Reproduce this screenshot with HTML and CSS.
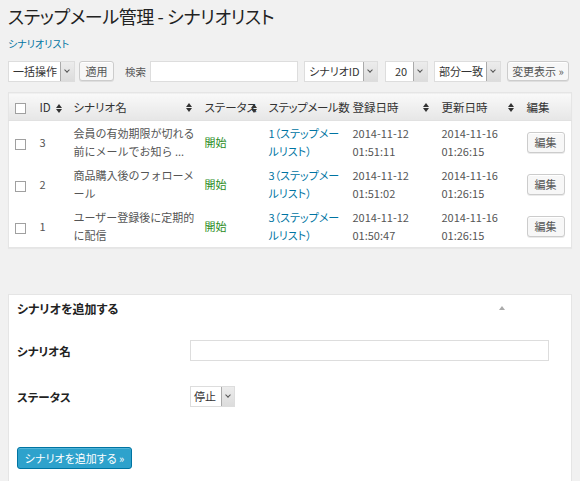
FILE: index.html
```html
<!DOCTYPE html>
<html lang="ja">
<head>
	<meta charset="UTF-8">
	<title>ステップメール管理 - シナリオリスト</title>
	<link rel="stylesheet" href="styles.css">
</head>
<body>
	<div class="wrap">
		<h1 class="page_title">ステップメール管理 - シナリオリスト</h1>
		<div class="subsub"><a href="#">シナリオリスト</a></div>

		<div class="tablenav">
			<div class="sel w_bulk"><span>一括操作</span><i class="arr"></i></div>
			<a class="btn">適用</a>
			<label class="search_label">検索</label>
			<input type="text" class="search_input">
			<div class="sel w_field"><span>シナリオID</span><i class="arr"></i></div>
			<div class="sel w_num"><span>20</span><i class="arr"></i></div>
			<div class="sel w_match"><span>部分一致</span><i class="arr"></i></div>
			<a class="btn btn_view">変更表示 »</a>
		</div>

		<table class="list">
			<colgroup>
				<col style="width:24px"><col style="width:34px"><col style="width:131px"><col style="width:64px">
				<col style="width:84px"><col style="width:89px"><col style="width:85px"><col>
			</colgroup>
			<thead>
				<tr>
					<th><span class="cb"></span></th>
					<th>ID <i class="sort"></i></th>
					<th class="sortable"><i class="sort"></i>シナリオ名</th>
					<th class="status_head">ステータス<i class="sort"></i></th>
					<th class="over">ステップメール数</th>
					<th class="sortable"><i class="sort"></i>登録日時</th>
					<th class="sortable"><i class="sort"></i>更新日時</th>
					<th>編集</th>
				</tr>
			</thead>
			<tbody>
				<tr>
					<td><span class="cb"></span></td>
					<td>3</td>
					<td>会員の有効期限が切れる前にメールでお知ら ...</td>
					<td class="st">開始</td>
					<td><a href="#">1（ステップメールリスト）</a></td>
					<td>2014-11-12 01:51:11</td>
					<td>2014-11-16 01:26:15</td>
					<td><a class="btn">編集</a></td>
				</tr>
				<tr>
					<td><span class="cb"></span></td>
					<td>2</td>
					<td>商品購入後のフォローメール</td>
					<td class="st">開始</td>
					<td><a href="#">3（ステップメールリスト）</a></td>
					<td>2014-11-12 01:51:02</td>
					<td>2014-11-16 01:26:15</td>
					<td><a class="btn">編集</a></td>
				</tr>
				<tr>
					<td><span class="cb"></span></td>
					<td>1</td>
					<td>ユーザー登録後に定期的に配信</td>
					<td class="st">開始</td>
					<td><a href="#">3（ステップメールリスト）</a></td>
					<td>2014-11-12 01:50:47</td>
					<td>2014-11-16 01:26:15</td>
					<td><a class="btn">編集</a></td>
				</tr>
			</tbody>
		</table>

		<div class="postbox">
			<div class="postbox_head">
				<h3>シナリオを追加する</h3>
				<i class="toggle"></i>
			</div>
			<div class="form_row">
				<label>シナリオ名</label>
				<input type="text" class="name_input">
			</div>
			<div class="form_row">
				<label>ステータス</label>
				<div class="sel w_status"><span>停止</span><i class="arr"></i></div>
			</div>
			<div class="submit_row">
				<a class="btn_primary">シナリオを追加する »</a>
			</div>
		</div>
	</div>
</body>
</html>
```

FILE: styles.css
```css
html,body{
	margin:0;
	padding:0;
}
body{
	background:#f1f1f1;
	color:#444;
	font-family:"Noto Sans CJK JP","Liberation Sans",sans-serif;
	font-size:12px;
}
a{
	color:#0074a2;
	text-decoration:none;
}
.wrap{
	padding:0 8px;
}
.page_title{
	margin:2px 0 0;
	font-size:18px;
	line-height:28px;
	font-weight:normal;
	color:#222;
	letter-spacing:-0.4px;
	font-feature-settings:"palt";
}
.subsub{
	margin-top:7px;
	font-size:10px;
	line-height:14px;
	font-feature-settings:"palt";
}
.tablenav{
	display:flex;
	align-items:center;
	height:22px;
	margin-top:9px;
}
/* 疑似セレクト */
.sel{
	display:flex;
	height:21px;
	box-sizing:border-box;
	border:1px solid #ddd;
	background:#fff;
	color:#333;
	font-size:11px;
}
.sel span{
	flex:1;
	padding-left:4px;
	line-height:19px;
	white-space:nowrap;
	overflow:hidden;
}
.sel .arr{
	flex:none;
	width:13px;
	border-left:1px solid #aaa;
	background:linear-gradient(#ececec,#dcdcdc);
	position:relative;
}
.sel .arr:after{
	content:"";
	position:absolute;
	left:4px;
	top:6px;
	width:3px;
	height:3px;
	border-right:1.5px solid #555;
	border-bottom:1.5px solid #555;
	transform:rotate(45deg);
}
.w_bulk{width:67px;}
.w_field{width:74px;margin-left:6px;}
.w_field span{font-feature-settings:"palt";}
.w_num{width:43px;margin-left:7px;}
.w_num span{padding-left:9px;}
.w_match{width:67px;margin-left:6px;}
.btn{
	display:inline-block;
	height:20px;
	box-sizing:border-box;
	padding:0 7px;
	border:1px solid #ccc;
	border-radius:3px;
	background:#f7f7f7;
	box-shadow:0 1px 0 #fff inset,0 1px 0 rgba(0,0,0,.08);
	color:#555;
	line-height:18px;
	font-size:11px;
	cursor:pointer;
	white-space:nowrap;
}
.tablenav .btn{margin-left:4px;width:35px;text-align:center;padding:0;}
.tablenav .btn_view{margin-left:6px;width:62px;}
.search_label{
	margin-left:11px;
	color:#555;
	font-size:10.5px;
}
.search_input{
	margin:0 0 0 4px;
	width:148px;
	height:21px;
	box-sizing:border-box;
	border:1px solid #ddd;
	padding:0;
}
.cb{
	display:inline-block;
	width:11px;
	height:11px;
	border:1px solid #a0a0a0;
	background:#fff;
	vertical-align:middle;
	box-sizing:border-box;
}
.list{
	width:100%;
	margin-top:10px;
	border-collapse:collapse;
	table-layout:fixed;
	background:#fff;
	border:1px solid #e5e5e5;
	box-shadow:0 1px 1px rgba(0,0,0,.04);
}
.list th{
	height:27px;
	padding:0 0 0 7px;
	text-align:left;
	font-weight:normal;
	font-size:11.5px;
	color:#333;
	white-space:nowrap;
	background:linear-gradient(#f9f9f9,#e6e6e6);
	border-bottom:1px solid #e1e1e1;
	font-feature-settings:"palt";
}
.list th.over{overflow:visible;letter-spacing:-0.4px;}
.list th:first-child,.list td:first-child{padding-left:6px;}
.sort{
	display:inline-block;
	width:6px;
	height:9px;
	vertical-align:middle;
	margin-left:3px;
	position:relative;
}
.sort:before,.sort:after{
	content:"";
	position:absolute;
	left:0;
	border-left:3px solid transparent;
	border-right:3px solid transparent;
}
.sort:before{top:0;border-bottom:4px solid #333;}
.sort:after{top:5px;border-top:4px solid #333;}
.sortable .sort{
	float:right;
	margin:4px 6px 0 0;
}
.status_head .sort{margin-left:-6px;}
.list td{
	padding:3px 2px 3px 7px;
	line-height:18px;
	height:36px;
	vertical-align:middle;
	color:#555;
	font-size:11px;
}
.list td a{font-feature-settings:"palt";}
.list td.st{color:#2a8c1c;}
.list td .btn{padding:0 7px;height:21px;line-height:19px;}
.postbox{
	margin-top:46px;
	background:#fff;
	border:1px solid #e5e5e5;
	padding:0 22px 12px 8px;
	min-height:200px;
}
.postbox_head{
	display:flex;
	align-items:center;
	justify-content:space-between;
	height:24px;
	padding-top:1px;
}
.postbox_head h3{
	margin:0;
	font-size:12px;
	font-weight:bold;
	color:#222;
	font-feature-settings:"palt";
}
.toggle{
	width:0;
	height:0;
	border-left:3px solid transparent;
	border-right:3px solid transparent;
	border-bottom:4px solid #aaa;
	margin-right:44px;
}
.form_row{
	display:grid;
	grid-template-columns:173px 1fr;
	align-items:center;
	height:21px;
	margin-top:20px;
}
.form_row + .form_row{margin-top:25px;}
.form_row label{
	font-weight:bold;
	color:#222;
	font-size:11.5px;
	font-feature-settings:"palt";
}
.name_input{
	height:21px;
	box-sizing:border-box;
	border:1px solid #ddd;
	margin:0;
}
.w_status{width:45px;}
.w_status span{padding-left:3px;}
.w_status .arr{width:12px;}
.submit_row{margin-top:40px;}
.btn_primary{
	display:inline-block;
	width:115px;
	height:22px;
	box-sizing:border-box;
	line-height:20px;
	text-align:center;
	background:#2ea2cc;
	border:1px solid #0074a2;
	border-radius:3px;
	box-shadow:0 1px 0 rgba(120,200,230,.5) inset;
	color:#fff;
	font-size:11px;
	font-feature-settings:"palt";
}
```
